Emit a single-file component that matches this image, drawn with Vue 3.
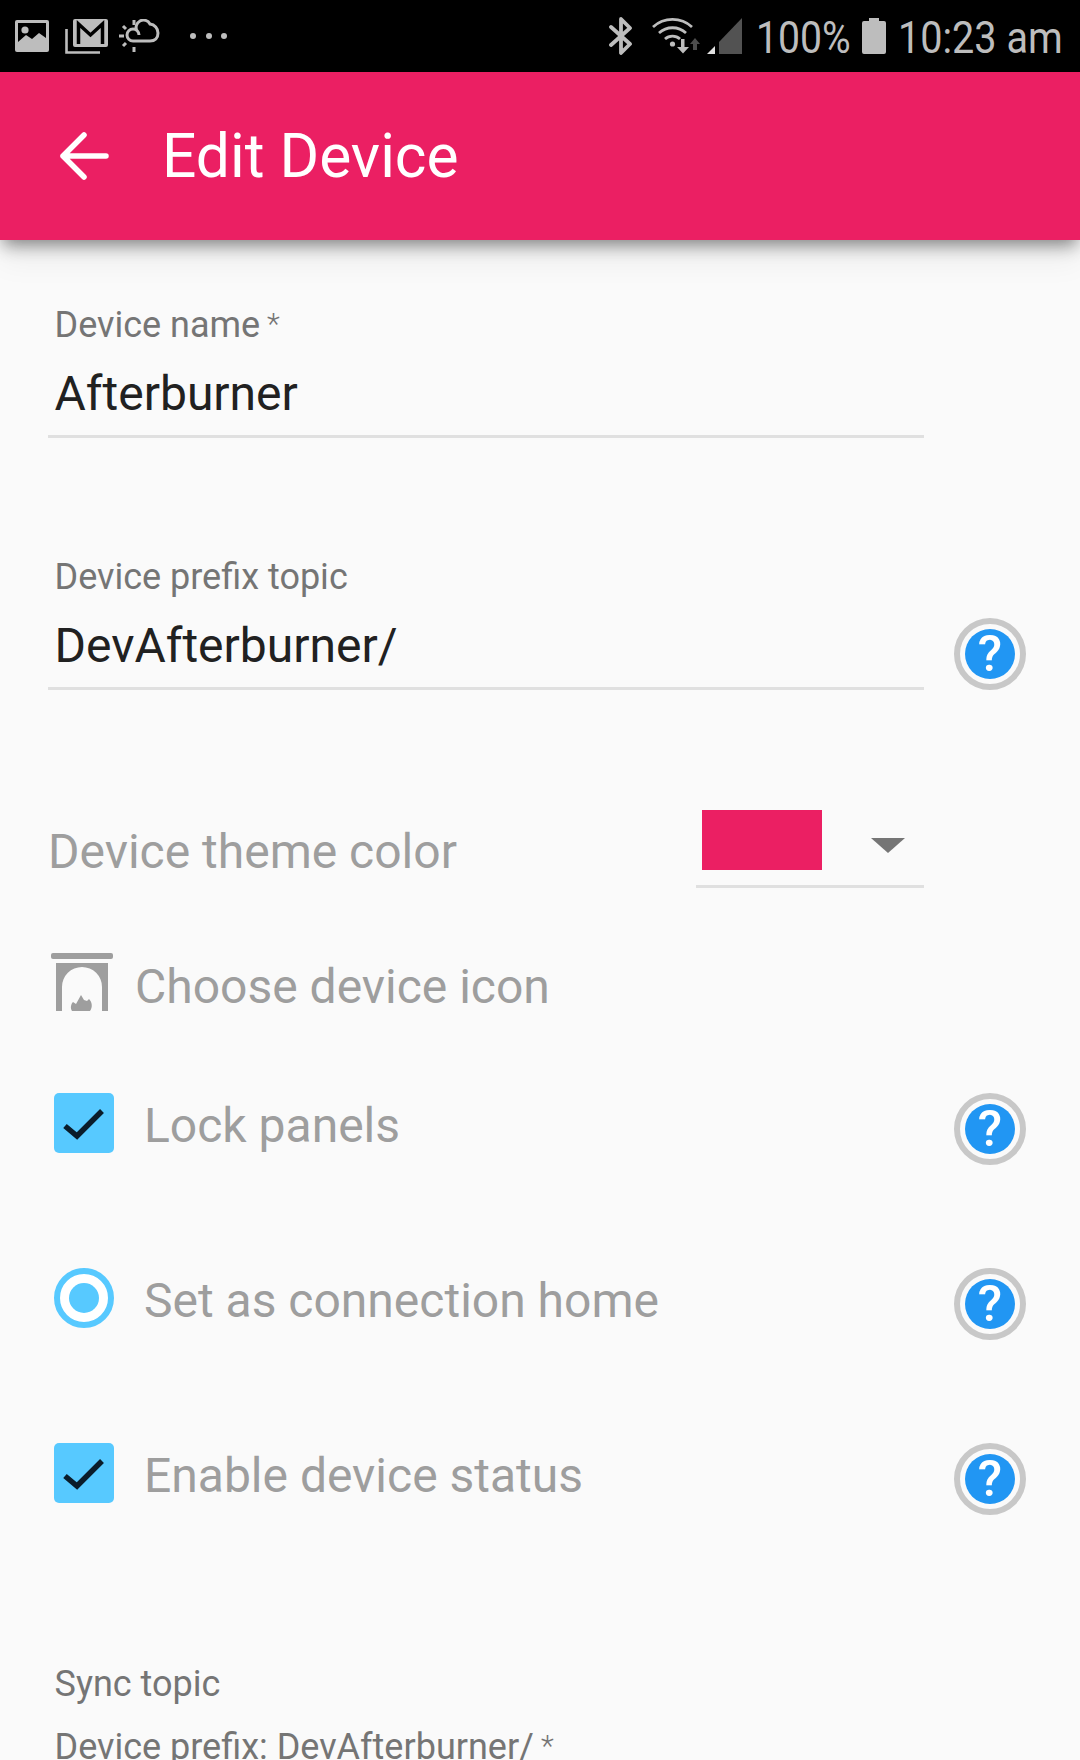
<script setup>
const options = [
  { id: 'lock', label: 'Lock panels', kind: 'check' },
  { id: 'home', label: 'Set as connection home', kind: 'radio' },
  { id: 'status', label: 'Enable device status', kind: 'check' },
]
</script>

<template>
  <div class="screen">
    <div class="status-bar">
      <div class="status-left">
        <svg class="ic-image" width="36" height="34" viewBox="0 0 36 34">
          <rect x="1" y="1" width="34" height="32" rx="2" fill="#bdbdbd" />
          <rect x="4" y="4" width="28" height="24" fill="#000" />
          <circle cx="11" cy="11" r="3.6" fill="#bdbdbd" />
          <path d="M4 23l8-7 6 4 7-6 7 5v11H4z" fill="#bdbdbd" />
        </svg>
        <svg class="ic-mail" width="43" height="35" viewBox="0 0 43 35">
          <path d="M1.500 10v23.500H35" fill="none" stroke="#bdbdbd" stroke-width="2.600" />
          <rect x="8" y="0" width="35" height="28" rx="2" fill="#bdbdbd" />
          <path d="M13.500 25V5l12 11 12-11v20" fill="none" stroke="#000" stroke-width="3.500" />
        </svg>
        <svg class="ic-weather" width="42" height="34" viewBox="0 0 42 34">
          <g stroke="#bdbdbd" stroke-width="3" fill="none">
            <path d="M15 1v5M15 28v5M0 17h5M4 7l3 3M4 27l3-3" />
            <path d="M18 12a7 7 0 0 1 13-7 9 9 0 0 1 8 9c0 5-3 8-8 8H14a6 6 0 1 1 6-6" />
          </g>
        </svg>
        <span class="dots"><i></i><i></i><i></i></span>
      </div>
      <div class="status-right">
        <svg class="ic-bt" width="24" height="38" viewBox="0 0 24 38">
          <path d="M2 10l19 17-9 9V2l9 9L2 28" fill="none" stroke="#bdbdbd" stroke-width="3.800" stroke-linejoin="round" stroke-linecap="round" />
        </svg>
        <svg class="ic-wifi" width="48" height="36" viewBox="0 0 48 36">
          <g fill="none" stroke="#bdbdbd" stroke-width="2.800">
            <path d="M1 9a29 29 0 0 1 39 0" />
            <path d="M7 15a20 20 0 0 1 27 0" />
            <path d="M13 21a11 11 0 0 1 15 0" />
          </g>
          <circle cx="20.500" cy="26" r="2.600" fill="#bdbdbd" />
          <path d="M29 21h3.500v8H37l-6 6.500-6-6.500h4z" fill="#bdbdbd" />
          <path d="M43 20l5 6h-3v6h-4v-6h-3z" fill="#4d4d4d" />
        </svg>
        <svg class="ic-signal" width="36" height="36" viewBox="0 0 36 36">
          <path d="M0 36l8-8v8z" fill="#e0e0e0" />
          <path d="M12 36V24L35 0v36z" fill="#525252" />
        </svg>
        <span class="status-text pct">100%</span>
        <svg class="ic-battery" width="24" height="36" viewBox="0 0 24 36">
          <path d="M7 0h10v3h5a2 2 0 0 1 2 2v29a2 2 0 0 1-2 2H2a2 2 0 0 1-2-2V5a2 2 0 0 1 2-2h5z" fill="#bdbdbd" />
        </svg>
        <span class="status-text clock">10:23 am</span>
      </div>
    </div>

    <header class="app-bar">
      <svg class="back" width="52" height="48" viewBox="0 0 52 48">
        <path d="M47 24H4M25 3L4 24l21 21" fill="none" stroke="#fff" stroke-width="5.500" stroke-linecap="round" stroke-linejoin="round" />
      </svg>
      <span class="title">Edit Device</span>
    </header>

    <main class="form">
      <div class="field first">
        <div class="field-main">
          <label class="small-label">Device name <span class="req">*</span></label>
          <div class="value">Afterburner</div>
        </div>
      </div>

      <div class="field second">
        <div class="field-main">
          <label class="small-label">Device prefix topic</label>
          <div class="value">DevAfterburner/</div>
        </div>
        <span class="help">?</span>
      </div>

      <div class="theme-row">
        <span class="muted">Device theme color</span>
        <div class="select">
          <span class="swatch"></span>
          <span class="caret"></span>
        </div>
      </div>

      <div class="icon-row">
        <svg class="fireplace" width="62" height="58" viewBox="0 0 62 58">
          <rect x="0" y="0" width="62" height="6" rx="2" fill="#9e9e9e" />
          <path fill-rule="evenodd" d="M5 10h52v48h-6V34a20 20 0 0 0-40 0v24H5z" fill="#9e9e9e" />
          <path d="M21 58c-2-3-1-7 1-9l3 2 5-9 3 5 3 1 2-2c3 3 4 8 1 12z" fill="#9e9e9e" />
        </svg>
        <span class="muted">Choose device icon</span>
      </div>

      <div v-for="o in options" :key="o.id" class="option" :class="'opt-' + o.id">
        <span v-if="o.kind === 'check'" class="check">
          <svg width="42" height="36" viewBox="0 0 42 36">
            <path d="M2 21l12 10L39 6" fill="none" stroke="#0a1c2a" stroke-width="5.500" />
          </svg>
        </span>
        <span v-else class="radio"><i></i></span>
        <span class="muted option-label">{{ o.label }}</span>
        <span class="help">?</span>
      </div>

      <div class="sync">
        <div class="small-label">Sync topic</div>
        <div class="small-label prefix">Device prefix: DevAfterburner/ <span class="req">*</span></div>
      </div>
    </main>
  </div>
</template>

<style>
html, body {
  margin: 0;
  background: #fafafa;
}
</style>

<style scoped>
.screen {
  width: 1080px;
  height: 1760px;
  overflow: hidden;
  background: #fafafa;
  font-family: Roboto, "Liberation Sans", sans-serif;
}

.status-bar {
  height: 72px;
  background: #000;
  display: flex;
  justify-content: space-between;
  align-items: center;
  padding: 0 18px 0 14px;
  box-sizing: border-box;
}

.status-left, .status-right {
  display: flex;
  align-items: center;
}

.ic-mail { margin-left: 15px; }
.ic-weather { margin-left: 11px; }

.dots {
  display: flex;
  gap: 9.500px;
  margin-left: 29px;
}

.dots i {
  width: 6px;
  height: 6px;
  border-radius: 50%;
  background: #bdbdbd;
}

.status-text {
  color: #bdbdbd;
  font-size: 45px;
  line-height: 72px;
  display: inline-block;
  transform-origin: left center;
  padding-top: 4px;
}

.ic-wifi { margin-left: 19px; }
.ic-signal { margin-left: 7px; }

.pct {
  width: 96px;
  margin-left: 13px;
  transform: scaleX(0.87);
}

.ic-battery { margin-left: 10px; }

.clock {
  width: 164px;
  margin-left: 12px;
  white-space: nowrap;
  transform: scaleX(0.88);
}

.app-bar {
  height: 168px;
  background: #eb1f63;
  display: flex;
  align-items: center;
  box-shadow: 0 8px 16px -3px rgba(0, 0, 0, 0.45), 0 20px 30px rgba(0, 0, 0, 0.06);
  position: relative;
  padding-left: 59px;
}

.title {
  color: #fff;
  font-size: 60.500px;
  margin-left: 51px;
}

.form {
  padding: 0 48px;
}

.field {
  display: flex;
}

.field-main {
  width: 876px;
  box-sizing: border-box;
  border-bottom: 3px solid #e0e0e0;
  padding-left: 6.500px;
}

.first { padding-top: 63px; }
.second { padding-top: 118px; }

.small-label {
  display: block;
  color: #757575;
  font-size: 36px;
  line-height: 42px;
}

.req {
  font-size: 30px;
  font-weight: 300;
  vertical-align: 3px;
  margin-left: -2px;
}

.value {
  color: #212121;
  font-size: 48px;
  line-height: 56px;
  padding: 20px 0 13px;
}

.help {
  width: 72px;
  height: 72px;
  box-sizing: border-box;
  flex: none;
  border: 6px solid #c8c8c8;
  border-radius: 50%;
  padding: 5px;
  margin-left: auto;
  margin-right: 6px;
  background: #2196f3 content-box;
  color: #fff;
  font-size: 50px;
  font-weight: 500;
  line-height: 50px;
  text-align: center;
}

.second .help {
  align-self: flex-end;
}

.theme-row {
  display: flex;
  justify-content: space-between;
  align-items: center;
  width: 876px;
  margin-top: 120px;
}

.theme-row .muted { margin-top: 6px; }

.muted {
  color: #9e9e9e;
  font-size: 48px;
  line-height: 56px;
}

.select {
  width: 228px;
  height: 78px;
  box-sizing: border-box;
  border-bottom: 3px solid #e0e0e0;
  padding-left: 6px;
  display: flex;
  align-items: flex-start;
}

.swatch {
  width: 120px;
  height: 60px;
  background: #eb1f63;
}

.caret {
  margin: 28px 0 0 49px;
  border-left: 17px solid transparent;
  border-right: 17px solid transparent;
  border-top: 15px solid #757575;
}

.icon-row {
  display: flex;
  align-items: center;
  gap: 22px;
  padding-left: 3px;
  margin-top: 65px;
  height: 58px;
}

.icon-row .muted { margin-top: 9px; }

.option {
  display: flex;
  align-items: center;
  height: 72px;
  padding-left: 6px;
}

.option .help { margin-top: 11px; }

.opt-lock { margin-top: 76px; }
.opt-home { margin-top: 103px; }
.opt-status { margin-top: 103px; }

.check {
  width: 60px;
  height: 60px;
  flex: none;
  border-radius: 5px;
  background: #57c9ff;
  display: flex;
  align-items: center;
  justify-content: center;
}

.radio {
  width: 60px;
  height: 60px;
  flex: none;
  box-sizing: border-box;
  border: 6px solid #57c9ff;
  border-radius: 50%;
  background: #fff;
  display: flex;
  align-items: center;
  justify-content: center;
}

.radio i {
  width: 30px;
  height: 30px;
  border-radius: 50%;
  background: #57c9ff;
}

.option-label {
  margin-left: 30px;
  margin-top: 6px;
}

.sync {
  margin-top: 154px;
  padding-left: 6.500px;
}

.prefix {
  margin-top: 20px;
  white-space: nowrap;
}
</style>
